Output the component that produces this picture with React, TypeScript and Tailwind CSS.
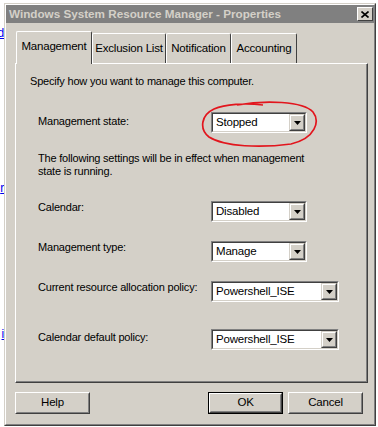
import React from 'react';

function Select({ value, width }: { value: string; width: string }) {
    return (
        <div className={`${width} h-[21px] flex border border-t-[#808080] border-l-[#808080] border-r-white border-b-white`}>
            <div className="flex-1 flex border border-t-[#404040] border-l-[#404040] border-r-[#d4d0c8] border-b-[#d4d0c8] bg-white">
                <span className="flex-1 pl-[3px] text-[11.5px] leading-[17px]">{value}</span>
                <div className="w-[16px] h-[17px] bg-[#d4d0c8] border border-t-[#d4d0c8] border-l-[#d4d0c8] border-r-[#404040] border-b-[#404040]">
                    <div className="w-full h-full flex items-center justify-center border border-t-white border-l-white border-r-[#808080] border-b-[#808080]">
                        <svg width="7" height="4" viewBox="0 0 7 4">
                            <path d="M0 0h7L3.5 4z" fill="#000" />
                        </svg>
                    </div>
                </div>
            </div>
        </div>
    );
}

function Button({ label, primary }: { label: string; primary?: boolean }) {
    return (
        <div className={`w-[75px] h-[22px] flex ${primary ? 'border border-black' : ''}`}>
            <div className="flex-1 flex border border-t-white border-l-white border-r-[#404040] border-b-[#404040]">
                <div className="flex-1 flex items-center justify-center border border-t-[#d4d0c8] border-l-[#d4d0c8] border-r-[#808080] border-b-[#808080] text-[11.5px]">
                    {label}
                </div>
            </div>
        </div>
    );
}

function Tab({ label, width, active }: { label: string; width: string; active?: boolean }) {
    if (active) {
        return (
            <div className={`${width} h-[33px] -mb-[1px] relative z-10 bg-[#d4d0c8] border-l border-t border-l-white border-t-white border-r border-r-[#404040] rounded-t-[2px] flex items-center justify-center pb-[2px]`}>
                {label}
            </div>
        );
    }
    return (
        <div className={`${width} h-[30px] bg-[#d4d0c8] border-l border-t border-l-white border-t-white border-r border-r-[#404040] rounded-t-[2px] flex items-center justify-center pt-[1px]`}>
            {label}
        </div>
    );
}

function Row({ label, children, top, nudge }: { label: string; children: React.ReactNode; top: string; nudge: string }) {
    return (
        <div className={`flex items-start ${top}`}>
            <span className={`w-[195px] pl-[22px] leading-[14px] whitespace-nowrap ${nudge}`}>{label}</span>
            {children}
        </div>
    );
}

export default function App() {
    return (
        <div className="w-[378px] h-[427px] bg-white flex overflow-hidden text-[11px] tracking-[-0.2px] text-black" style={{ fontFamily: '"Liberation Sans", Arial, sans-serif' }}>
            <div className="w-[4px] overflow-hidden flex flex-col items-end text-[#0000ee] underline text-[12px] leading-[12px] whitespace-nowrap">
                <span className="mt-[27px]">d</span>
                <span className="mt-[143px]">r</span>
                <span className="mt-[134px]">i</span>
            </div>

            <div className="w-[372px] h-[423px] mt-[3px] bg-[#d4d0c8] border border-t-[#d4d0c8] border-l-[#d4d0c8] border-r-[#404040] border-b-[#404040] flex flex-col">
                <div className="flex-1 flex flex-col border border-t-white border-l-white border-r-[#808080] border-b-[#808080]">
                    <div className="h-[18px] bg-[#808080] flex items-center justify-between pl-[3px] pr-[1px]">
                        <span className="font-bold text-[11.7px] text-[#d4d0c8] tracking-[0px]">Windows System Resource Manager - Properties</span>
                        <div className="w-[16px] h-[14px] bg-[#d4d0c8] border border-t-white border-l-white border-r-[#404040] border-b-[#404040] flex items-center justify-center">
                            <svg width="8" height="7" viewBox="0 0 8 7">
                                <path d="M0.5 0.5L7.5 6.5M7.5 0.5L0.5 6.5" stroke="#000" strokeWidth="1.6" />
                            </svg>
                        </div>
                    </div>

                    <div className="flex flex-col pl-[9px] pr-[5px]">
                        <div className="flex items-end h-[32px] mt-[8px] pl-[1px] text-[11.5px]">
                            <Tab label="Management" width="w-[76px]" active />
                            <Tab label="Exclusion List" width="w-[74px]" />
                            <Tab label="Notification" width="w-[65px]" />
                            <Tab label="Accounting" width="w-[66px]" />
                        </div>

                        <div className="w-[353px] h-[320px] border border-t-white border-l-white border-r-[#404040] border-b-[#404040]">
                            <div className="h-full border-r border-b border-r-[#808080] border-b-[#808080] flex flex-col">
                                <p className="pl-[14px] mt-[10px] leading-[14px]">Specify how you want to manage this computer.</p>

                                <Row label="Management state:" top="mt-[24px]" nudge="mt-[2px]">
                                    <div className="relative">
                                        <Select value="Stopped" width="w-[96px]" />
                                        <svg className="absolute -left-[12px] -top-[12px] pointer-events-none" width="122" height="48" viewBox="0 0 122 48">
                                            <path
                                                d="M38 5C66 0 104 1 114 12C121 21 117 38 92 44C62 48 26 47 10 37C0 29 2 15 15 9C26 4 46 3 64 5"
                                                fill="none"
                                                stroke="#e2151d"
                                                strokeWidth="1.7"
                                            />
                                        </svg>
                                    </div>
                                </Row>

                                <p className="pl-[22px] pr-[40px] mt-[19px] leading-[13px]">
                                    The following settings will be in effect when management state is running.
                                </p>

                                <Row label="Calendar:" top="mt-[23px]" nudge="-mt-[1px]">
                                    <Select value="Disabled" width="w-[96px]" />
                                </Row>
                                <Row label="Management type:" top="mt-[19px]" nudge="-mt-[1px]">
                                    <Select value="Manage" width="w-[96px]" />
                                </Row>
                                <Row label="Current resource allocation policy:" top="mt-[19px]" nudge="-mt-[1px]">
                                    <Select value="Powershell_ISE" width="w-[128px]" />
                                </Row>
                                <Row label="Calendar default policy:" top="mt-[27px]" nudge="mt-[1px]">
                                    <Select value="Powershell_ISE" width="w-[128px]" />
                                </Row>
                            </div>
                        </div>

                        <div className="flex items-center mt-[9px] pr-[6px]">
                            <Button label="Help" />
                            <div className="flex-1" />
                            <Button label="OK" primary />
                            <div className="w-[5px]" />
                            <Button label="Cancel" />
                        </div>
                    </div>
                </div>
            </div>
        </div>
    );
}
